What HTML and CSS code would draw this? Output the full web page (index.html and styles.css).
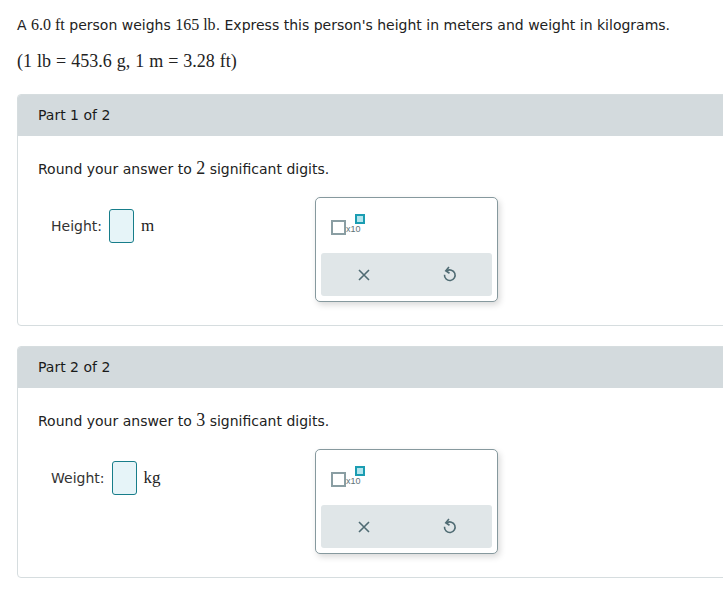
FILE: index.html
```html
<!DOCTYPE html>
<html lang="en">
<head>
    <meta charset="UTF-8">
    <meta name="viewport" content="width=device-width, initial-scale=1.0">
    <title>Unit Conversion</title>
    <link rel="stylesheet" href="styles.css">
</head>
<body>
    <div class="problem">
        <p class="statement">A <span class="math">6.0 ft</span> person weighs <span class="math">165 lb</span>. Express this person's height in meters and weight in kilograms.</p>
        <p class="given"><span class="math big">(1 lb = 453.6 g, 1 m = 3.28 ft)</span></p>
    </div>

    <div class="part">
        <div class="part-header">Part 1 of 2</div>
        <div class="part-body">
            <p class="hint">Round your answer to <span class="math num">2</span> significant digits.</p>
            <div class="answer-row">
                <div class="answer">
                    <label>Height:</label>
                    <span class="answer-box"></span>
                    <span class="math unit">m</span>
                </div>
                <div class="palette">
                    <div class="palette-tools">
                        <span class="sci">
                            <span class="sci-base"></span>
                            <span class="sci-x">x10</span>
                            <span class="sci-exp"></span>
                        </span>
                    </div>
                    <div class="palette-actions">
                        <button class="act" title="Clear">
                            <svg width="14" height="14" viewBox="0 0 14 14"><path d="M2 2 L12 12 M12 2 L2 12" stroke="#4f6b73" stroke-width="1.6" fill="none"/></svg>
                        </button>
                        <button class="act" title="Undo">
                            <svg width="15" height="17" viewBox="0 0 14 16"><path d="M4.5 4.5 A5 5 0 1 1 2.3 8.2" stroke="#4f6b73" stroke-width="1.5" fill="none"/><path d="M6.5 1 L3.5 4.5 L7 6.8" stroke="#4f6b73" stroke-width="1.5" fill="none"/></svg>
                        </button>
                    </div>
                </div>
            </div>
        </div>
    </div>

    <div class="part">
        <div class="part-header">Part 2 of 2</div>
        <div class="part-body">
            <p class="hint">Round your answer to <span class="math num">3</span> significant digits.</p>
            <div class="answer-row">
                <div class="answer">
                    <label>Weight:</label>
                    <span class="answer-box"></span>
                    <span class="math unit">kg</span>
                </div>
                <div class="palette">
                    <div class="palette-tools">
                        <span class="sci">
                            <span class="sci-base"></span>
                            <span class="sci-x">x10</span>
                            <span class="sci-exp"></span>
                        </span>
                    </div>
                    <div class="palette-actions">
                        <button class="act" title="Clear">
                            <svg width="14" height="14" viewBox="0 0 14 14"><path d="M2 2 L12 12 M12 2 L2 12" stroke="#4f6b73" stroke-width="1.6" fill="none"/></svg>
                        </button>
                        <button class="act" title="Undo">
                            <svg width="15" height="17" viewBox="0 0 14 16"><path d="M4.5 4.5 A5 5 0 1 1 2.3 8.2" stroke="#4f6b73" stroke-width="1.5" fill="none"/><path d="M6.5 1 L3.5 4.5 L7 6.8" stroke="#4f6b73" stroke-width="1.5" fill="none"/></svg>
                        </button>
                    </div>
                </div>
            </div>
        </div>
    </div>
</body>
</html>
```

FILE: styles.css
```css
body {
    font-family: "DejaVu Sans", Verdana, sans-serif;
    font-size: 14px;
    color: #222;
    margin: 0;
    padding: 0 0 0 17px;
    overflow: hidden;
}
p {
    margin: 0;
}
.math {
    font-family: "Liberation Serif", "Times New Roman", serif;
    font-size: 16px;
}
.math.big {
    font-size: 18px;
    word-spacing: 0.5px;
}
.math.num {
    font-size: 18px;
    line-height: 1;
}
.problem {
    padding-top: 15px;
}
.statement {
    line-height: 20px;
}
.given {
    margin-top: 15px;
    line-height: 22px;
}
.part {
    margin-top: 21px;
    margin-right: -20px;
    border: 1px solid #d6dddf;
    border-radius: 4px;
    overflow: hidden;
}
.part + .part {
    margin-top: 20px;
}
.part-header {
    background-color: #d3dadd;
    height: 41px;
    line-height: 41px;
    padding-left: 20px;
    color: #1a1a1a;
}
.part-body {
    padding: 23px 20px 23px 20px;
}
.hint {
    line-height: 20px;
}
.answer-row {
    display: flex;
    align-items: flex-start;
    margin-top: 18px;
}
.answer {
    display: flex;
    align-items: center;
    gap: 7px;
    padding-left: 13px;
    padding-top: 12px;
    width: 264px;
}
.answer label {
    color: #333;
}
.answer-box {
    display: inline-block;
    width: 23px;
    height: 32px;
    border: 1px solid #177d8a;
    border-radius: 3px;
    background-color: #e6f4f8;
}
.unit {
    font-size: 17px;
}
.palette {
    width: 171px;
    border: 1px solid #86999e;
    border-radius: 5px;
    padding: 5px 5px 5px 5px;
    box-shadow: 2px 3px 6px rgba(0, 0, 0, 0.15);
    background-color: #fff;
}
.palette-tools {
    height: 50px;
    padding-left: 10px;
}
.sci {
    position: relative;
    display: inline-block;
    width: 32px;
    height: 30px;
}
.sci-base {
    position: absolute;
    left: 0;
    top: 17px;
    width: 11px;
    height: 11px;
    border: 2px solid #8a9ea3;
}
.sci-x {
    position: absolute;
    left: 15px;
    top: 21px;
    font-family: "Liberation Sans", Arial, sans-serif;
    font-size: 9px;
    color: #5c7278;
}
.sci-exp {
    position: absolute;
    left: 24px;
    top: 11px;
    width: 6px;
    height: 6px;
    border: 2px solid #1b9db2;
    background-color: #b4e6ee;
}
.palette-actions {
    display: flex;
    background-color: #e0e6e8;
    border-radius: 3px;
    height: 43px;
}
.act {
    flex: 1;
    border: none;
    background: none;
    display: flex;
    align-items: center;
    justify-content: center;
    padding: 0;
    cursor: pointer;
}
```
